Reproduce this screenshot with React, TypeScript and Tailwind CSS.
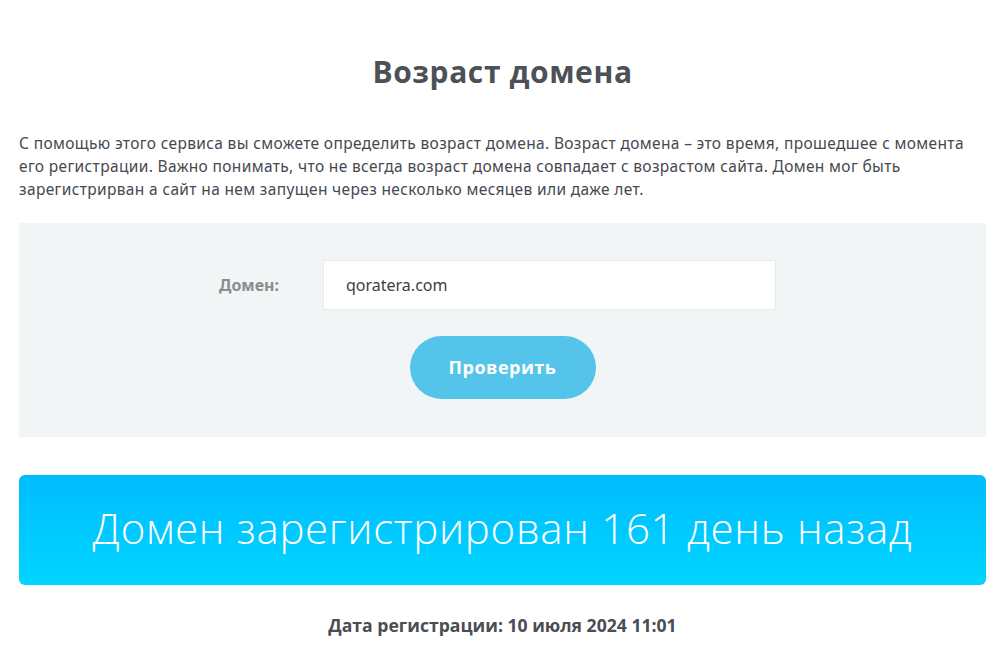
import React from "react";

export default function App() {
  return (
    <div className="min-h-[651px] bg-white px-[19px] text-[#4a4d53]" style={{ fontFamily: '"Open Sans", "Noto Sans", sans-serif' }}>
      <h1 className="pt-[52px] text-center text-[30px] font-bold leading-[40px] tracking-[0.6px] text-[#4c5057]">Возраст домена</h1>
      <p className="mt-[40px] text-[15.5px] leading-[23px] tracking-[0.35px] text-[#464950]" style={{ fontFamily: '"Noto Sans", sans-serif' }}>
        С помощью этого сервиса вы сможете определить возраст домена. Возраст домена – это время, прошедшее с момента
        <br />
        его регистрации. Важно понимать, что не всегда возраст домена совпадает с возрастом сайта. Домен мог быть
        <br />
        зарегистрирван а сайт на нем запущен через несколько месяцев или даже лет.
      </p>
      <div className="mt-[22px] flex h-[214px] flex-col items-center bg-[#f2f5f6] pt-[37px]">
        <div className="flex items-center pr-[10px]">
          <label className="w-[104px] text-[16px] font-bold text-[#8b8d8f]" style={{ fontFamily: '"Noto Sans", sans-serif' }}>Домен:</label>
          <div className="flex h-[50px] w-[453px] items-center rounded-[2px] border border-[#e8ebec] bg-white pl-[22px] text-[16px] text-[#3d4045]" style={{ fontFamily: '"Noto Sans", sans-serif' }}>
            qoratera.com
          </div>
        </div>
        <button className="mt-[26px] h-[63px] w-[186px] rounded-full bg-[#55c4eb] text-[18px] font-bold tracking-[0.5px] text-white">Проверить</button>
      </div>
      <div className="mt-[38px] flex h-[110px] items-center justify-center rounded-[6px] bg-gradient-to-b from-[#00bcff] to-[#00d5ff] pb-[6px]">
        <span className="text-[42px] font-light tracking-[0.7px] text-white">Домен зарегистрирован 161 день назад</span>
      </div>
      <div className="mt-[27px] text-center text-[17.6px] font-bold text-[#4a4d53]">Дата регистрации: 10 июля 2024 11:01</div>
    </div>
  );
}
